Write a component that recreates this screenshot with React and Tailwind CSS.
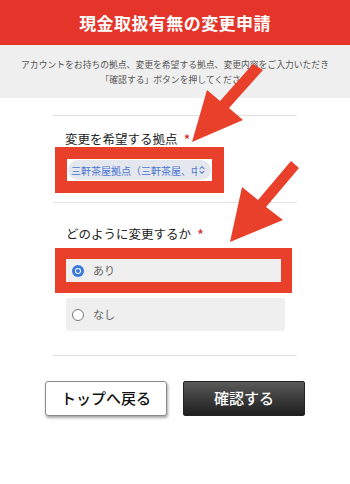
import { ChevronsUpDown } from 'lucide-react';

const font = { fontFamily: '"Noto Sans CJK JP", "Noto Sans", sans-serif' };

const Asterisk = () => <span className="ml-[6px] text-[#c9302c] text-[15px] leading-none">*</span>;

const RadioRow = ({ label, checked }) => (
  <div className="flex items-center h-[33px] rounded-[3px] bg-[#efefef] pl-[6px]">
    {checked ? (
      <span className="w-[12px] h-[12px] rounded-full bg-[#3a78e0] flex items-center justify-center">
        <span className="w-[6px] h-[6px] rounded-full bg-white flex items-center justify-center">
          <span className="w-[4px] h-[4px] rounded-full bg-[#3a78e0]" />
        </span>
      </span>
    ) : (
      <span className="w-[12px] h-[12px] rounded-full border border-[#777] bg-white" />
    )}
    <span className="ml-[9px] text-[11px] text-[#666]">{label}</span>
  </div>
);

export default function App() {
  return (
    <div className="relative w-[350px] h-[484px] bg-white overflow-hidden" style={font}>
      <div className="h-[45px] bg-[#e5352a] flex items-center justify-center">
        <h1 className="text-white text-[17px] font-bold tracking-wide">現金取扱有無の変更申請</h1>
      </div>
      <div className="h-[53px] bg-[#efefef] flex flex-col items-center justify-center text-[8.8px] leading-[15px] text-[#555]">
        <p>アカウントをお持ちの拠点、変更を希望する拠点、変更内容をご入力いただき</p>
        <p>「確認する」ボタンを押してください</p>
      </div>

      <div className="w-[244px] mx-auto">
        <div className="mt-[17px] border-t border-[#e2e2e2]" />

        <div className="pl-[12px] pt-[15px] pb-[9px]">
          <div className="flex items-center h-[16px] text-[12.5px] text-[#222]">
            変更を希望する拠点<Asterisk />
          </div>
          <div className="-ml-[10px] inline-block border-[12px] border-[#e8402a] bg-white p-[1px]">
            <div className="w-[143px] h-[20px] rounded-full bg-[#e4e7ee] flex items-center pl-[3px] pr-[4px] overflow-hidden">
              <span className="flex-1 text-[10px] text-[#4a76d2] whitespace-nowrap overflow-hidden">三軒茶屋拠点（三軒茶屋、中</span>
              <ChevronsUpDown size={10} strokeWidth={2.5} className="text-[#4a76d2] shrink-0" />
            </div>
          </div>
        </div>

        <div className="border-t border-[#e2e2e2]" />

        <div className="pl-[13px] pr-[12px] pt-[23px] pb-[24px]">
          <div className="flex items-center h-[16px] text-[12.5px] text-[#222]">
            どのように変更するか<Asterisk />
          </div>
          <div className="mt-[12px] relative">
            <RadioRow label="あり" checked />
            <div className="absolute -left-[11px] -right-[7px] -top-[6px] -bottom-[6px] border-[11px] border-[#e8402a]" />
          </div>
          <div className="mt-[11px]">
            <RadioRow label="なし" />
          </div>
        </div>

        <div className="border-t border-[#e2e2e2]" />
      </div>

      <div className="mt-[25px] flex justify-center gap-[16px]">
        <button className="w-[122px] h-[35px] bg-white border border-[#8a8a8a] rounded-[3px] shadow-[1px_2px_3px_rgba(0,0,0,0.35)] text-[15px] font-medium text-[#111]">
          トップへ戻る
        </button>
        <button className="w-[122px] h-[35px] bg-gradient-to-b from-[#5a5a5a] to-[#1f1f1f] rounded-[2px] border border-[#222] text-[15px] font-medium text-white">
          確認する
        </button>
      </div>

      <svg className="absolute inset-0 pointer-events-none" width="350" height="484" viewBox="0 0 350 484">
        <polygon
          points="192,142 207,90 220,101 253,64 263,70 229,108 243,120"
          fill="#e8402a"
        />
        <polygon
          points="230,242 242,187 258,200 291,161 299,168 266,207 283,220"
          fill="#e8402a"
        />
      </svg>
    </div>
  );
}
